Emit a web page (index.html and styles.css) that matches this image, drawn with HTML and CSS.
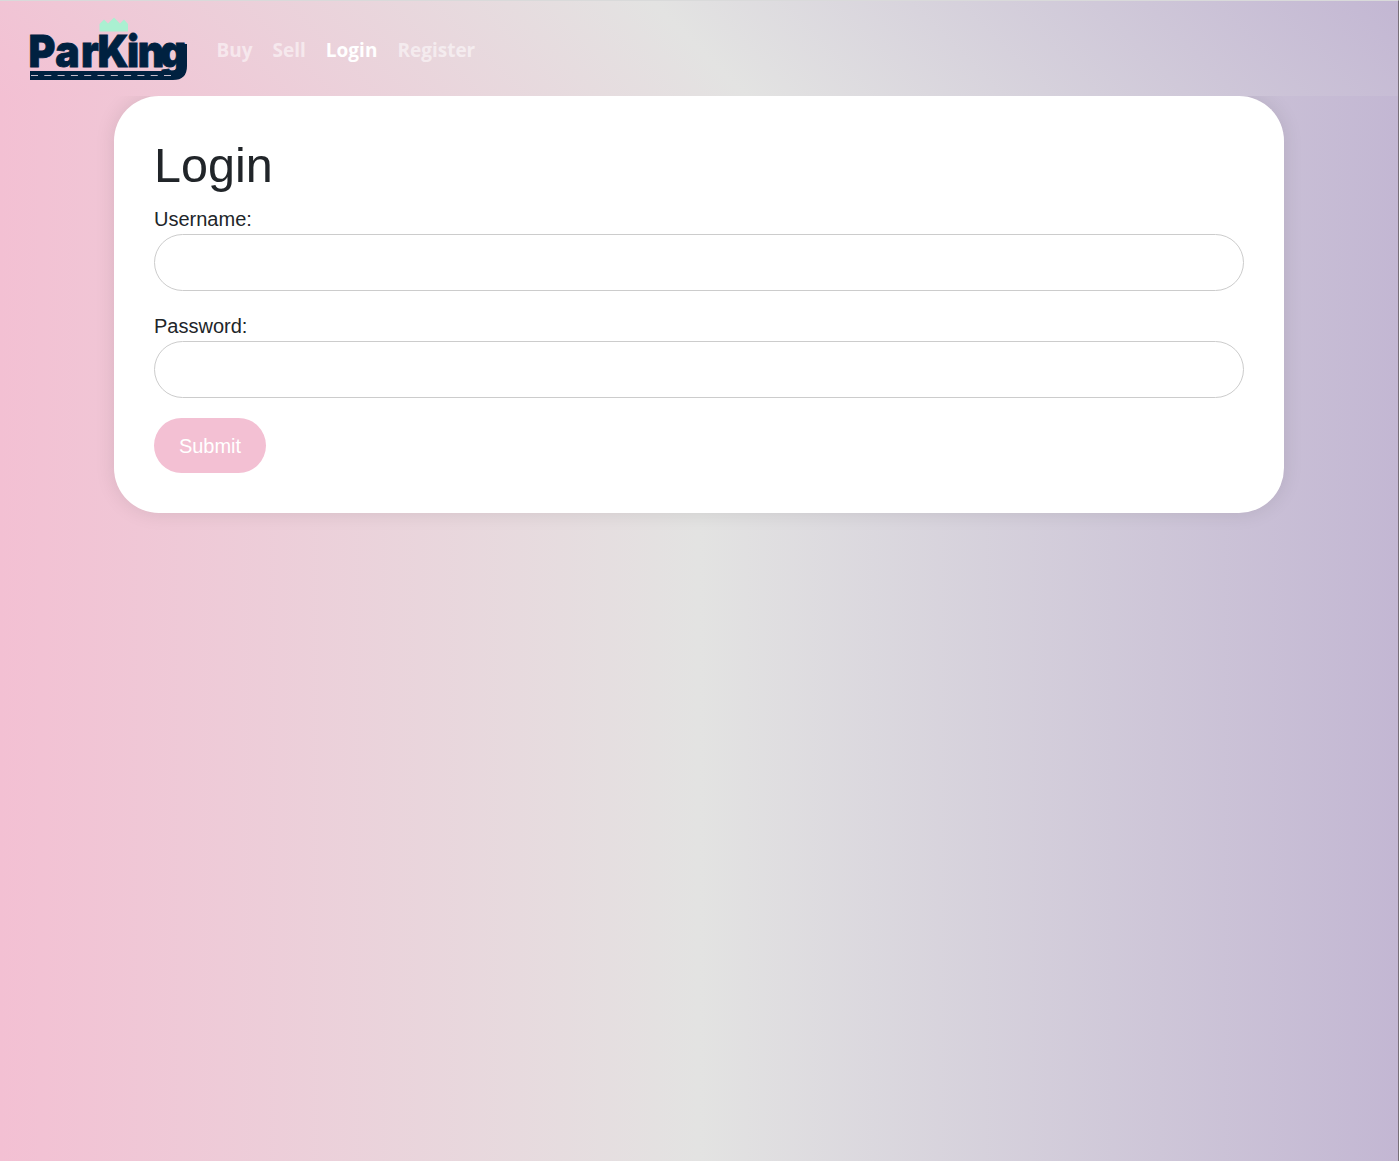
FILE: index.html
```html
<!DOCTYPE html>
<html lang="en">
<head>
<meta charset="utf-8">
<title>ParKing - Login</title>
<link rel="stylesheet" href="styles.css">
</head>
<body>
<div class="page">
  <nav class="navbar">
    <a class="brand" href="#" aria-label="ParKing">
      <svg class="logo" viewBox="0 0 157 62" width="157" height="62">
        <path class="crown" d="M69.500 13.500V6L74 1.500L78 5.500L84 -.500L90 5.500L94 1.500L98 6V13.500Z"/>
        <path class="road" d="M0 53H140Q147 53 148 48V26H157V48Q157 62 143 62H0Z"/>
        <text class="wordmark" transform="scale(.92 1)" y="49" x="-1.500 27.500 55.500 73.500 105.500 117 141">ParKing</text>
        <path class="lane" d="M1 57.500H145"/>
      </svg>
    </a>
    <div class="links">
      <a class="link" href="#">Buy</a>
      <a class="link" href="#">Sell</a>
      <a class="link active" href="#">Login</a>
      <a class="link" href="#">Register</a>
    </div>
  </nav>
  <main class="card">
    <h1 class="title">Login</h1>
    <form class="form">
      <label class="label" for="username">Username:</label>
      <input class="input" id="username" type="text">
      <label class="label" for="password">Password:</label>
      <input class="input" id="password" type="password">
      <button class="submit" type="button">Submit</button>
    </form>
  </main>
</div>
</body>
</html>
```
FILE: styles.css
```css
* { box-sizing: border-box; }

body {
  margin: 0;
  font: 20px/30px "Liberation Sans", Arial, sans-serif;
  color: #212529;
}

.page {
  min-height: 1161px;
  border-top: 1px solid #d9dada;
  border-right: 1px solid #777078;
  background: linear-gradient(90deg, #f3c0d3, #e3e3e2 50%, #c3b7d3) padding-box;
}

.navbar {
  position: relative;
  display: flex;
  align-items: flex-start;
  height: 95px;
  padding: 17px 30px 0;
  background: linear-gradient(45deg, #f3c0d3, #e3e3e2 50%, #c3b7d3);
}

.brand { display: block; height: 62px; margin-right: 29.500px; }
.logo { display: block; overflow: visible; }
.crown { fill: #aaf0d1; }
.road { fill: #002140; }
.wordmark {
  font: 900 44.500px Inter, sans-serif;
  fill: #002140;
  stroke: #002140;
  stroke-width: .8px;
}
.lane { fill: none; stroke: #c5bccb; stroke-width: 1.200px; stroke-dasharray: 7 6.300; }

.links { display: flex; gap: 20px; padding-top: 17px; }
.link {
  font: 700 19px/30px "Open Sans", sans-serif;
  color: rgba(255, 255, 255, .55);
  text-decoration: none;
}
.link.active { color: #fff; }

.card {
  width: 1170px;
  height: 417px;
  margin: 0 auto;
  padding: 40px;
  border-radius: 45px;
  background: #fff;
  box-shadow: 0 0 20px rgba(0, 0, 0, .1);
}

.title { margin: 0 0 9px; font-size: 48.500px; font-weight: 400; line-height: 59px; }
.form { display: flex; flex-direction: column; align-items: flex-start; }
.label { height: 30px; }
.input {
  width: 100%;
  height: 57px;
  margin: 0 0 20px;
  padding: 12px 25px;
  border: 1px solid #ccc;
  border-radius: 30px;
  font: inherit;
}
.submit {
  width: 112px;
  height: 55px;
  padding: 0;
  border: 0;
  border-radius: 30px;
  background: #f3c0d3;
  color: #fff;
  font: inherit;
}
```
